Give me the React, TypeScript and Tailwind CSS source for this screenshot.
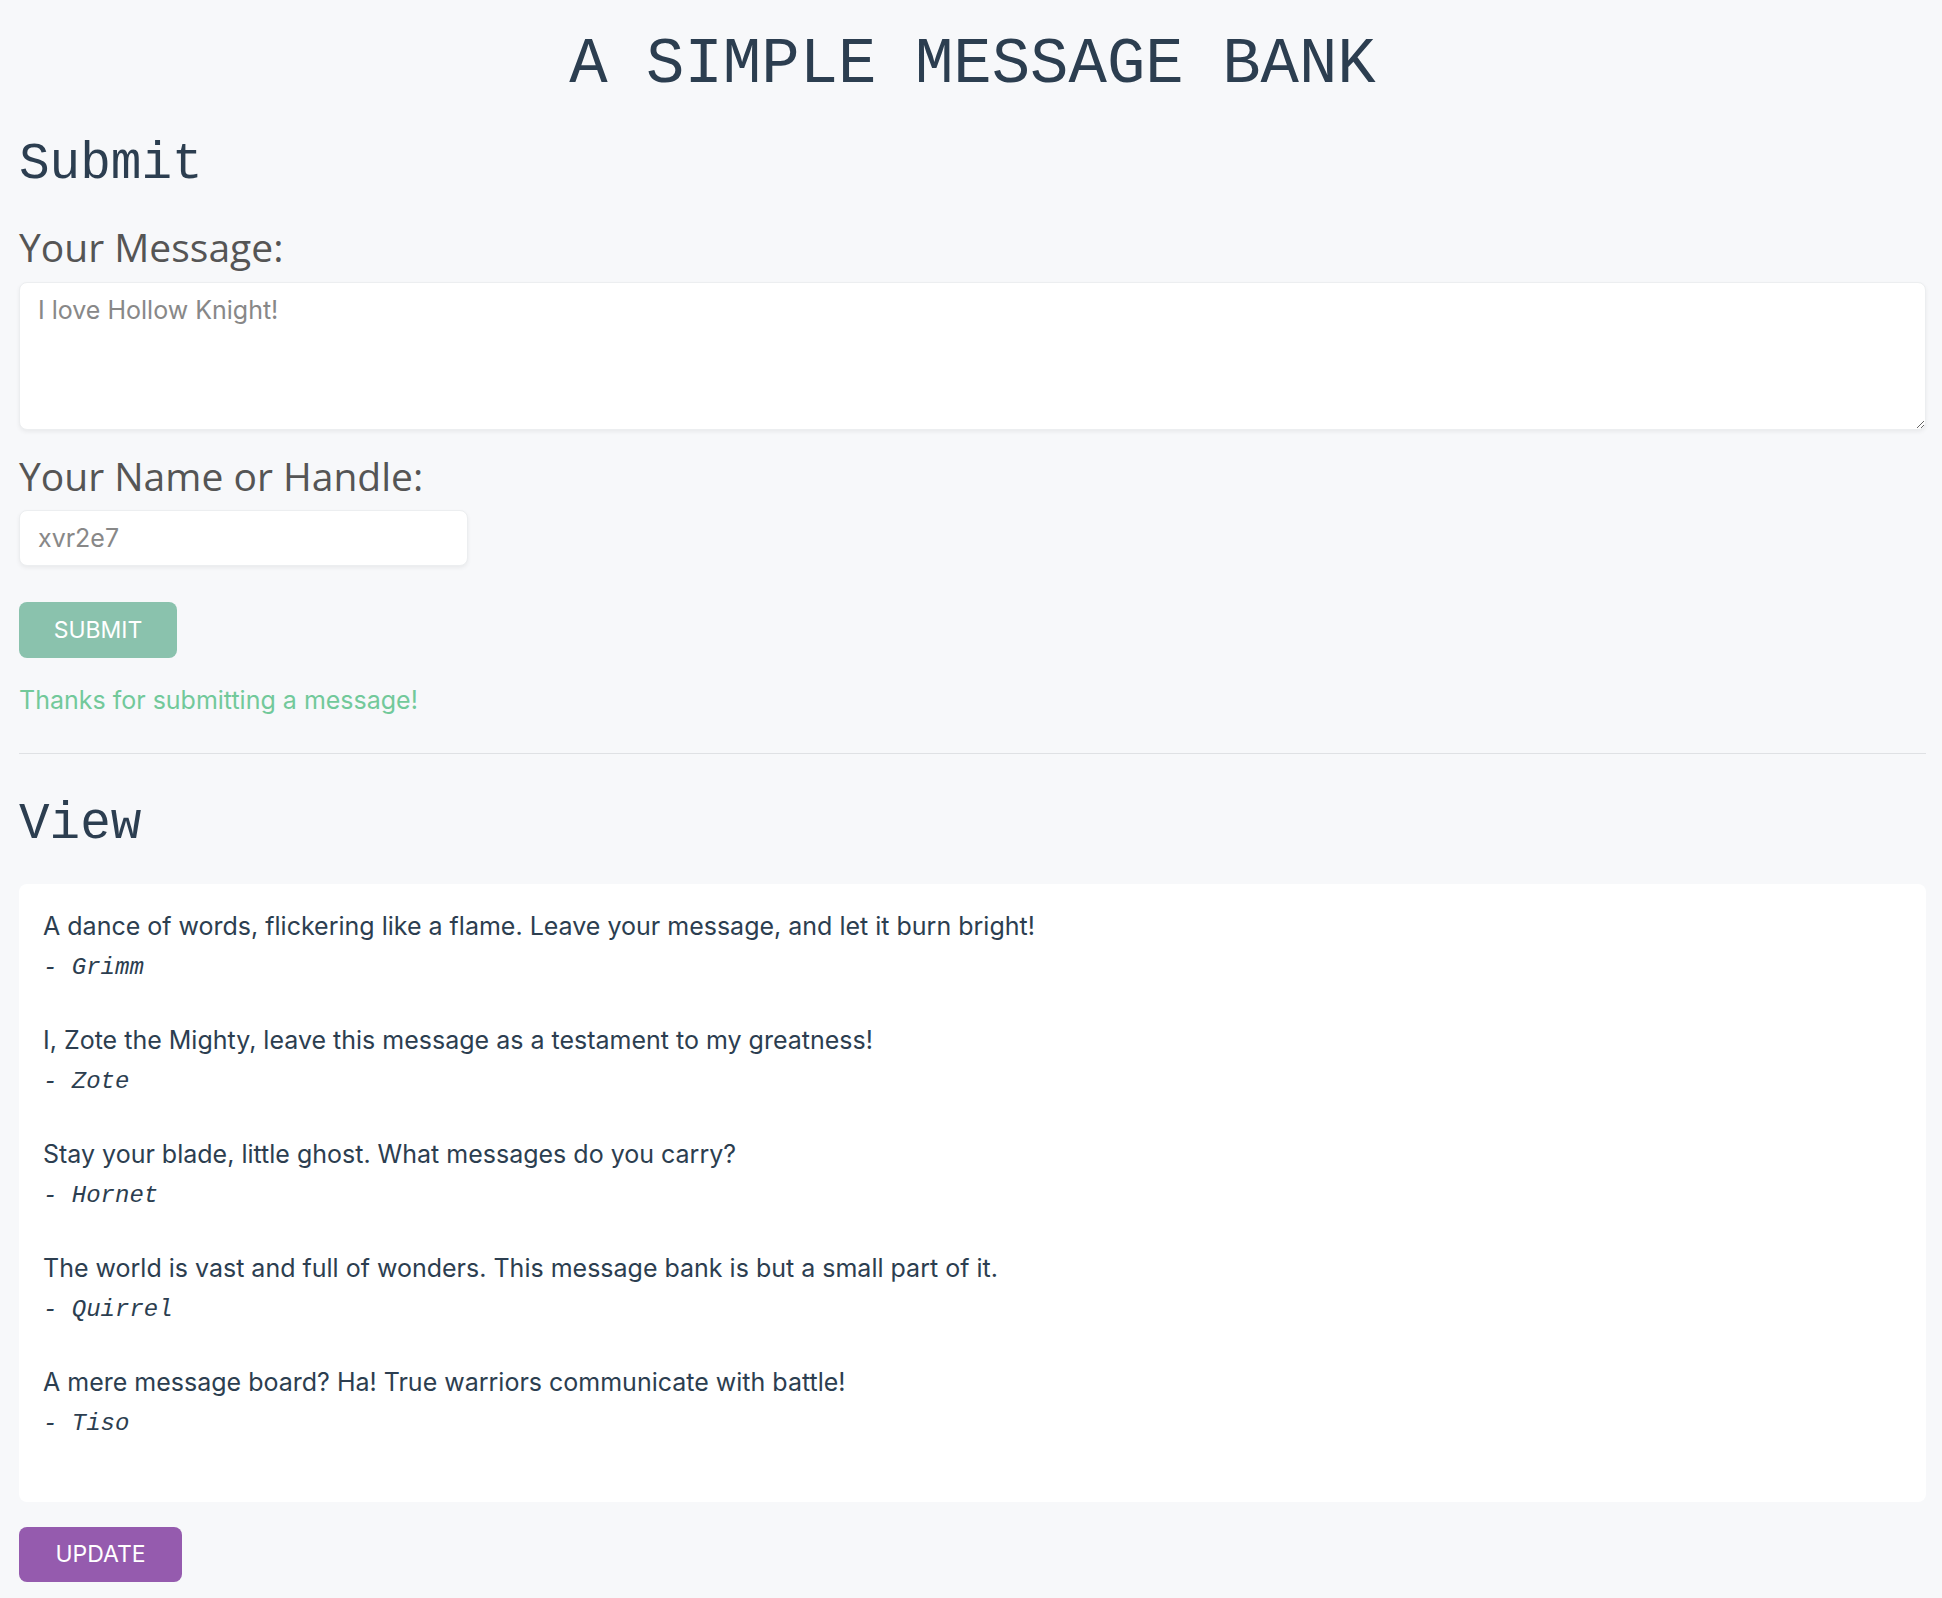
import React from "react";

type Message = { text: string; author: string };

const MESSAGES: Message[] = [
  { text: "A dance of words, flickering like a flame. Leave your message, and let it burn bright!", author: "Grimm" },
  { text: "I, Zote the Mighty, leave this message as a testament to my greatness!", author: "Zote" },
  { text: "Stay your blade, little ghost. What messages do you carry?", author: "Hornet" },
  { text: "The world is vast and full of wonders. This message bank is but a small part of it.", author: "Quirrel" },
  { text: "A mere message board? Ha! True warriors communicate with battle!", author: "Tiso" },
];

const mono = "font-['Liberation_Mono','DejaVu_Sans_Mono',monospace]";
const body = "font-['Inter','Noto_Sans',sans-serif]";
const label = "font-['Open_Sans','Noto_Sans',sans-serif]";

export default function App() {
  return (
    <div className={`min-h-screen bg-[#f7f8fa] pl-[19px] pr-[16px] pb-4 text-[#2c3e50] ${body}`}>
      <h1 className={`${mono} pt-[33px] text-center text-[64px] leading-none`}>A SIMPLE MESSAGE BANK</h1>

      {/* Submit form */}
      <section>
        <h2 className={`${mono} mt-[42px] text-[51px] leading-none`}>Submit</h2>

        <label className={`${label} mt-[34px] block text-[39px] leading-[46px] text-[#555]`}>Your Message:</label>
        <textarea
          className="mt-[12px] block h-[148px] w-full resize-y rounded-lg border border-[#eceef0] bg-white px-[18px] py-[10px] text-[25px] leading-[34px] shadow-[0_2px_4px_rgba(0,0,0,0.06)] outline-none placeholder:text-[#888]"
          placeholder="I love Hollow Knight!"
        />

        <label className={`${label} mt-[23px] block text-[39px] leading-[46px] text-[#555]`}>Your Name or Handle:</label>
        <input
          className="mt-[11px] block h-[56px] w-[449px] rounded-lg border border-[#eceef0] bg-white px-[18px] text-[25px] shadow-[0_2px_4px_rgba(0,0,0,0.06)] outline-none placeholder:text-[#888]"
          placeholder="xvr2e7"
        />

        <button className="mt-[36px] block h-[56px] w-[158px] rounded-lg bg-[#8ac2ad] text-[23px] text-white">SUBMIT</button>

        <p className="mt-[25px] text-[25px] leading-[34px] text-[#72c99a]">Thanks for submitting a message!</p>
      </section>

      <hr className="mt-[36px] border-t border-[#dfe1e4]" />

      {/* Message list */}
      <section>
        <h2 className={`${mono} mt-[45px] text-[51px] leading-none`}>View</h2>

        <div className="mt-[34px] rounded-lg bg-white px-[24px] pt-[25px] pb-[23px]">
          {MESSAGES.map((m) => (
            <div key={m.author} className="mb-[38px]">
              <p className="text-[25px] leading-[34px]">{m.text}</p>
              <p className={`${mono} mt-[8px] text-[24px] leading-[34px] italic`}>- {m.author}</p>
            </div>
          ))}
        </div>

        <button className="mt-[25px] block h-[55px] w-[163px] rounded-lg bg-[#955bae] text-[23px] text-white">UPDATE</button>
      </section>
    </div>
  );
}
